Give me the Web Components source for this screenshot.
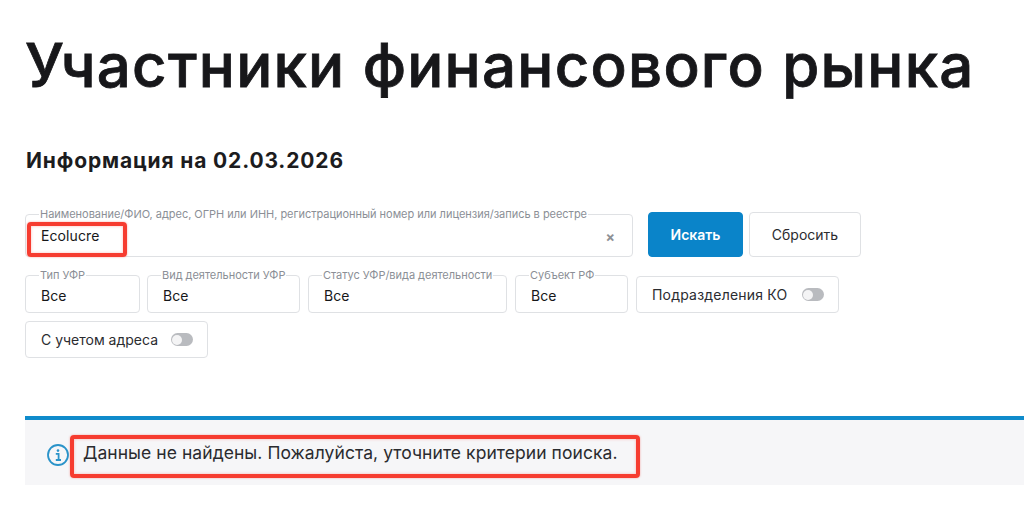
<!DOCTYPE html>
<html lang="ru"><head><meta charset="utf-8"><title>Участники финансового рынка</title>
<style>
html,body{margin:0;padding:0;background:#fff;overflow:hidden}
body{font-family:Inter,"Liberation Sans",sans-serif;color:#1c1c1e;width:1024px;height:521px}
</style></head><body>
<template id="t-field"><style>
:host{display:block;box-sizing:border-box;position:relative}
fieldset{box-sizing:border-box;height:100%;margin:0;padding:0 0 0 15px;border:1px solid #dfe1e4;border-radius:4px;display:flex;align-items:center;min-width:0}
legend{margin-left:-2px;padding:0 1px;font-size:11px;line-height:11px;color:#8b8f96;white-space:nowrap;letter-spacing:-.025px}
.v{font-size:14px;line-height:18px;color:#16171a;flex:1;letter-spacing:.1px;padding-bottom:var(--vb,2px)}
::slotted([slot=end]){margin-right:17px;margin-bottom:2px}
</style><fieldset><legend></legend><div class="v"><slot></slot></div><slot name="end"></slot></fieldset></template>
<template id="t-toggle"><style>
:host{display:flex;align-items:center;justify-content:space-between;box-sizing:border-box;height:37px;border:1px solid #dfe1e4;border-radius:4px;padding:0 14px 0 15px;font-size:14px;color:#2b2c30;white-space:nowrap}
.sw{width:22px;height:13px;border-radius:7px;background:#b9bbbf;position:relative}
.sw::after{content:"";position:absolute;left:1px;top:1.5px;width:10px;height:10px;border-radius:50%;background:#f4f4f5}
</style><span><slot></slot></span><span class="sw"></span></template>
<template id="t-btn"><style>
:host{display:flex;align-items:center;justify-content:center;box-sizing:border-box;height:45px;border-radius:4px;font-size:14px;border:1px solid #dfe1e4;color:#2b2c30;background:#fff;font-weight:400}
:host([primary]){background:#0a84c9;border-color:#0a84c9;color:#fff;font-weight:600}
</style><slot></slot></template>
<template id="t-alert"><style>
:host{display:flex;align-items:center;box-sizing:border-box;height:69px;margin-left:25px;border-top:4px solid #0f8bcb;background:#f6f6f8;padding-left:21px;position:relative}
svg{flex:none;margin-right:13px;margin-top:5px}
span{font-size:17.5px;letter-spacing:.06px;color:#2a2b2f;}
</style><svg width="24" height="24" viewBox="0 0 24 24" fill="none"><circle cx="12" cy="12" r="10" stroke="#2a93c9" stroke-width="1.8"/><circle cx="12" cy="7.6" r="1.3" fill="#2a93c9"/><path d="M9.8 10.8H12.6V16.6M9.8 17H15" stroke="#2a93c9" stroke-width="1.8"/></svg><span><slot></slot></span></template>
<template id="t-mark"><style>
:host{display:block;position:absolute;box-sizing:border-box;border:4px solid #f63c30;border-radius:4px;box-shadow:0 0 2px rgba(246,60,48,.5),inset 0 0 3px rgba(246,60,48,.35);pointer-events:none}
</style></template>
<template id="t-page"><style>
:host{display:block;position:relative;height:521px}
h1{margin:0;padding:29px 0 0 25px;font-size:60px;line-height:73px;font-weight:500;letter-spacing:1.25px;-webkit-text-stroke:.8px #17171a;color:#17171a;white-space:nowrap}
h2{margin:0;padding:46px 0 0 26px;font-size:21px;line-height:26px;font-weight:700;color:#1c1c1e;letter-spacing:.85px}
.r{display:flex;margin-left:25px;align-items:flex-end}
.r1{margin-top:35px;height:48px}
.r2{margin-top:13px;height:43px}
.r3{margin-top:8px;height:37px}
.x{font-size:14px;color:#8e9196;font-weight:700;line-height:14px}
</style>
<h1>Участники финансового рынка</h1>
<h2>Информация на 02.03.2026</h2>
<div class="r r1">
<x-field label="Наименование/ФИО, адрес, ОГРН или ИНН, регистрационный номер или лицензия/запись в реестре" style="width:608px;height:48px;--vb:4px">Ecolucre<span class="x" slot="end">×</span></x-field>
<x-btn primary style="width:95px;margin-left:15px">Искать</x-btn>
<x-btn style="width:112px;margin-left:6px">Сбросить</x-btn>
</div>
<div class="r r2">
<x-field label="Тип УФР" style="width:115px;height:43px">Все</x-field>
<x-field label="Вид деятельности УФР" style="width:153px;height:43px;margin-left:7px">Все</x-field>
<x-field label="Статус УФР/вида деятельности" style="width:199px;height:43px;margin-left:8px">Все</x-field>
<x-field label="Субъект РФ" style="width:113px;height:43px;margin-left:8px">Все</x-field>
<x-toggle style="width:203px;margin-left:8px;letter-spacing:.2px">Подразделения КО</x-toggle>
</div>
<div class="r r3"><x-toggle style="width:183px">С учетом адреса</x-toggle></div>
<div style="height:58px"></div>
<x-alert>Данные не найдены. Пожалуйста, уточните критерии поиска.</x-alert>
<x-mark style="left:27px;top:222px;width:100px;height:35px"></x-mark>
<x-mark style="left:70px;top:435px;width:570px;height:43px"></x-mark>
</template>
<x-page></x-page>
<script>
function def(tag,id,init){customElements.define(tag,class extends HTMLElement{constructor(){super();this.attachShadow({mode:'open'}).append(document.getElementById(id).content.cloneNode(true));}connectedCallback(){init&&init(this)}})}
def('x-field','t-field',e=>{e.shadowRoot.querySelector('legend').textContent=e.getAttribute('label')});
def('x-toggle','t-toggle');def('x-btn','t-btn');def('x-alert','t-alert');def('x-mark','t-mark');def('x-page','t-page');
</script>
</body></html>
